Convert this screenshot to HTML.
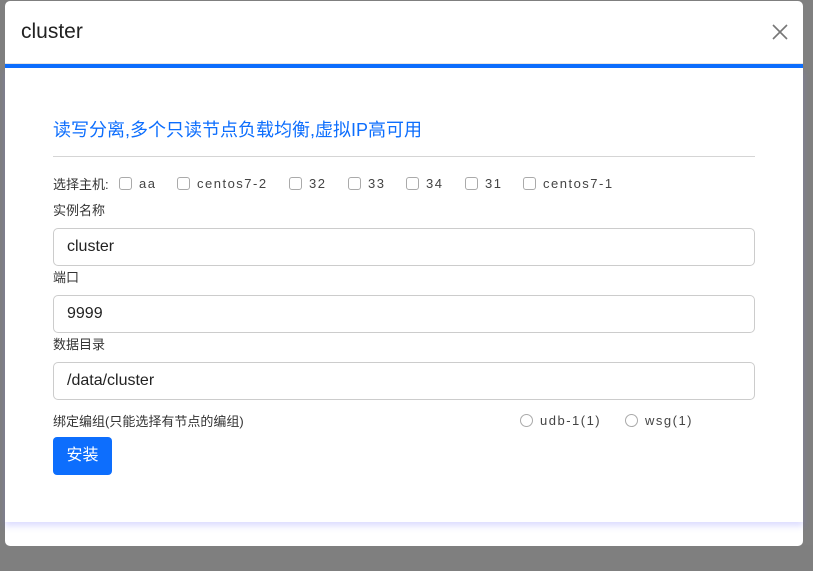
<!DOCTYPE html>
<html><head><meta charset="utf-8"><style>
*{box-sizing:border-box;margin:0;padding:0}
body{width:813px;height:571px;background:#7f7f7f;position:relative;overflow:hidden;font-family:"Liberation Sans","Noto Sans CJK SC",sans-serif;color:#333}
.bgstrip{position:absolute;left:803px;top:0;width:10px;height:545px;background:#808080}
.modal{position:absolute;left:5px;top:1px;width:798px;height:545px;background:#fff;border-radius:5px}
.hdr{height:63px;border-bottom:1px solid #e5e5e5;position:relative}
.hdr .t{position:absolute;left:16px;top:19px;font-size:21px;color:#222}
.hdr svg{position:absolute;right:15px;top:23px}
.bar{height:4px;background:#0d6efd}
.card{position:absolute;left:0;top:67px;width:798px;height:454px;background:#fff;box-shadow:0 4px 6px rgba(120,120,255,.25)}
.ttl{position:absolute;left:48px;top:50px;font-size:18px;line-height:24px;color:#0d6efd}
.hr{position:absolute;left:48px;top:88px;width:702px;height:1px;background:#d5d5d5}
.lbl{position:absolute;left:48px;font-size:13px;line-height:18px;color:#333}
.it{position:absolute;top:107px;font-size:13px;line-height:18px;color:#444;letter-spacing:1.5px}
.cb{display:inline-block;width:13px;height:13px;border:1px solid #aaa;border-radius:3px;vertical-align:-2px;margin-right:7px}
.rd{display:inline-block;width:13px;height:13px;border:1px solid #aaa;border-radius:50%;vertical-align:-2px;margin-right:7px}
.inp{position:absolute;left:48px;width:702px;height:38px;border:1px solid #ccc;border-radius:5px;padding:0 13px;font-size:16px;line-height:36px;color:#222}
.btn{position:absolute;left:48px;top:369px;width:59px;height:38px;background:#0d6efd;border-radius:4px;color:#fff;font-size:16px;text-align:center;line-height:38px}
</style></head><body>
<div class="bgstrip"></div>
<div class="modal">
<div class="hdr"><span class="t">cluster</span><svg width="16" height="16" viewBox="0 0 16 16"><path d="M1 1L15 15M15 1L1 15" stroke="#777" stroke-width="1.6"/></svg></div>
<div class="bar"></div>
<div class="card">
<div class="ttl">读写分离,多个只读节点负载均衡,虚拟IP高可用</div>
<div class="hr"></div>
<div class="lbl" style="top:108px">选择主机:</div>
<div class="it" style="left:114px"><span class="cb"></span>aa</div>
<div class="it" style="left:172px"><span class="cb"></span>centos7-2</div>
<div class="it" style="left:284px"><span class="cb"></span>32</div>
<div class="it" style="left:343px"><span class="cb"></span>33</div>
<div class="it" style="left:401px"><span class="cb"></span>34</div>
<div class="it" style="left:460px"><span class="cb"></span>31</div>
<div class="it" style="left:518px"><span class="cb"></span>centos7-1</div>
<div class="lbl" style="top:134px">实例名称</div>
<div class="inp" style="top:160px">cluster</div>
<div class="lbl" style="top:201px">端口</div>
<div class="inp" style="top:227px">9999</div>
<div class="lbl" style="top:268px">数据目录</div>
<div class="inp" style="top:294px">/data/cluster</div>
<div class="lbl" style="top:345px">绑定编组(只能选择有节点的编组)</div>
<div class="it" style="top:344px;left:515px"><span class="rd"></span>udb-1(1)</div>
<div class="it" style="top:344px;left:620px"><span class="rd"></span>wsg(1)</div>
<div class="btn">安装</div>
</div>
</div>
</body></html>
